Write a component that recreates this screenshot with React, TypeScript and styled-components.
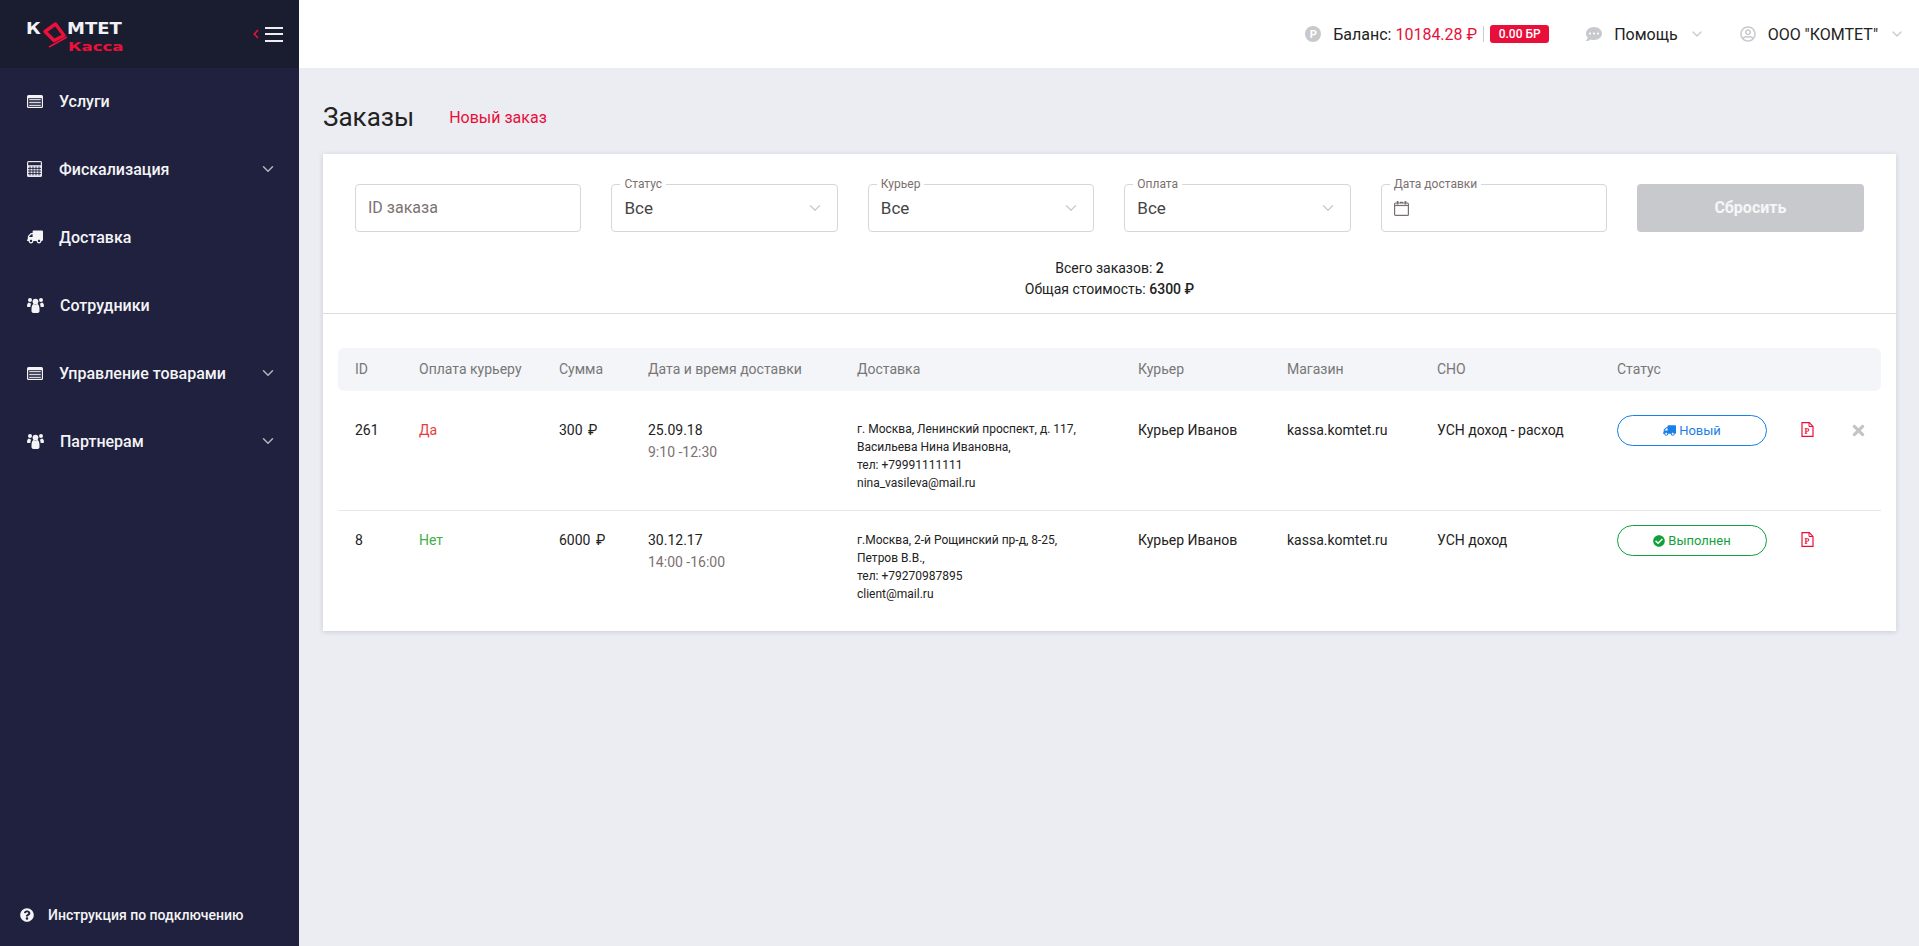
import React, { FC } from "react";
import styled, { createGlobalStyle } from "styled-components";
import {
  FaCheckCircle,
  FaCommentDots,
  FaQuestionCircle,
  FaRegUserCircle,
  FaTimes,
  FaTruck,
} from "react-icons/fa";
import { ChevronDown } from "lucide-react";

const GlobalStyle = createGlobalStyle`
  html, body {
    margin: 0;
    height: 100%;
    background: #ececf3;
    font-family: Roboto, "Liberation Sans", sans-serif;
    color: #222;
  }
  * { box-sizing: border-box; }
`;

const Page = styled.div`
  display: flex;
  height: 946px;
  overflow: hidden;
`;

const Sidebar = styled.aside`
  width: 299px;
  flex: none;
  display: flex;
  flex-direction: column;
  background: #1f213e;
  color: #fff;
`;

const SideHead = styled.div`
  height: 68px;
  flex: none;
  background: #1a1c30;
  display: flex;
  align-items: center;
  justify-content: space-between;
  padding: 0 16px 0 26px;
`;

const Logo = styled.div`
  display: flex;
  flex-direction: column;
  font-family: "DejaVu Sans", sans-serif;
  font-weight: 700;
  line-height: 1;
  margin-top: 7px;
`;

const LogoTop = styled.div`
  display: flex;
  align-items: center;
  height: 12px;
  font-size: 15px;
  color: #f2f2f4;
`;

const LogoLetters = styled.span<{ $width: number }>`
  display: inline-block;
  width: ${(p) => p.$width}px;
  transform: scaleX(1.2);
  transform-origin: left center;
  white-space: nowrap;
`;

const LogoBottom = styled.div`
  margin: 5px 0 0 42px;
  font-size: 12px;
  height: 11px;
  transform: scaleX(1.38);
  transform-origin: left center;
  color: #ed1139;
`;

const Toggle = styled.div`
  display: flex;
  align-items: center;
  gap: 6px;
`;

const Burger = styled.div`
  width: 18px;
  height: 15px;
  border-top: 2px solid #eee;
  border-bottom: 2px solid #eee;
  position: relative;
  &::after {
    content: "";
    position: absolute;
    left: 0;
    right: 0;
    top: 4.5px;
    height: 2px;
    background: #eee;
  }
`;

const Menu = styled.nav`
  display: flex;
  flex-direction: column;
  flex: 1;
  margin-top: -1px;
`;

const MenuItem = styled.div`
  height: 68px;
  display: flex;
  align-items: center;
  padding: 0 22px 0 27px;
  font-size: 16px;
  font-weight: 500;
  color: #f4f4f6;
`;

const MenuIcon = styled.span`
  width: 32px;
  flex: none;
  display: flex;
  align-items: center;
`;

const MenuLabel = styled.span<{ $shift?: boolean }>`
  flex: 1;
  margin-left: ${(p) => (p.$shift ? 1 : 0)}px;
`;

const SideChevron = styled(ChevronDown)`
  color: #b3b4c0;
`;

const Help = styled.div`
  display: flex;
  align-items: center;
  gap: 14px;
  padding: 0 20px 23px;
  font-size: 14px;
  font-weight: 500;
  color: #f4f4f6;
`;

const Main = styled.main`
  flex: 1;
  min-width: 0;
  display: flex;
  flex-direction: column;
`;

const TopBar = styled.header`
  height: 68px;
  flex: none;
  background: #fff;
  display: flex;
  align-items: center;
  justify-content: flex-end;
  padding-right: 14px;
  font-size: 16px;
  color: #222;
`;

const TopGroup = styled.div<{ $gap: number }>`
  display: flex;
  align-items: center;
  margin-left: ${(p) => p.$gap}px;
`;

const Coin = styled.span`
  width: 16px;
  height: 16px;
  border-radius: 50%;
  background: #c8c9cd;
  color: #fff;
  font-size: 11px;
  font-weight: 700;
  display: flex;
  align-items: center;
  justify-content: center;
  margin-right: 12px;
`;

const Money = styled.span`
  color: #e8103a;
  margin-left: 4px;
`;

const Sep = styled.span`
  width: 1px;
  height: 16px;
  background: #ccc;
  margin: 0 6px;
`;

const Bonus = styled.span`
  height: 18px;
  width: 59px;
  border-radius: 3px;
  background: #e8103a;
  color: #fff;
  font-size: 12px;
  font-weight: 500;
  display: flex;
  align-items: center;
  justify-content: center;
`;

const TopIcon = styled.span`
  display: flex;
  color: #c8c9cd;
  margin-right: 12px;
`;

const TopChevron = styled(ChevronDown)`
  color: #c8c9cd;
  margin-left: 11px;
`;

const Content = styled.div`
  padding: 0 23px 0 24px;
`;

const TitleRow = styled.div`
  height: 86px;
  display: flex;
  align-items: center;
  gap: 35px;
  padding-top: 12px;
`;

const Title = styled.h1`
  margin: 0;
  font-size: 26px;
  font-weight: 400;
  color: #222;
`;

const NewOrder = styled.a`
  font-size: 16px;
  color: #e8103a;
`;

const Card = styled.section`
  background: #fff;
  box-shadow: 0 1px 5px rgba(30, 30, 60, 0.16);
  height: 477px;
`;

const Filters = styled.div`
  display: grid;
  grid-template-columns: repeat(6, 1fr);
  gap: 30px;
  padding: 30px 32.4px 0 32px;
`;

const IdInput = styled.input`
  height: 48px;
  width: 100%;
  border: 1px solid #d6d6da;
  border-radius: 4px;
  padding: 0 12px 2px;
  font: 16px Roboto, sans-serif;
  outline: none;
  &::placeholder {
    color: #7d7272;
    opacity: 1;
  }
`;

const Field = styled.div`
  position: relative;
  height: 48px;
  border: 1px solid #d6d6da;
  border-radius: 4px;
  padding: 0 12px;
  display: flex;
  align-items: center;
  justify-content: space-between;
  font-size: 17px;
  color: #444;
`;

const FieldLabel = styled.span`
  position: absolute;
  left: 8px;
  top: -7px;
  padding: 0 4px;
  background: #fff;
  font-size: 12px;
  line-height: 13px;
  color: #7b6f6f;
`;

const FieldChevron = styled(ChevronDown)`
  color: #c8c9cd;
  margin-right: 1px;
`;

const Reset = styled.button`
  height: 48px;
  border: none;
  border-radius: 4px;
  padding: 0 0 2px;
  background: #c8c9cd;
  color: #f6f6f7;
  font: 700 16px Roboto, sans-serif;
`;

const Summary = styled.div`
  margin-top: 26px;
  height: 56px;
  border-bottom: 1px solid #dcdcde;
  text-align: center;
  font-size: 14px;
  line-height: 21px;
  color: #222;
  b {
    font-weight: 500;
  }
`;

const Table = styled.div`
  margin: 34px 15px 0;
`;

const Row = styled.div`
  display: grid;
  grid-template-columns: 64px 140px 89px 209px 281px 149px 150px 180px 201px 52px 1fr;
`;

const HeadRow = styled(Row)`
  height: 43px;
  padding-bottom: 2px;
  align-items: center;
  background: #f4f5f8;
  border-radius: 6px;
  font-size: 14px;
  color: #777;
`;

const BodyRow = styled(Row)<{ $last?: boolean }>`
  height: 120px;
  padding-top: ${(p) => (p.$last ? 18 : 28)}px;
  border-bottom: ${(p) => (p.$last ? "none" : "1px solid #e8e8ea")};
  font-size: 14px;
  line-height: 22px;
  color: #222;
`;

const Cell = styled.div`
  padding-left: 17px;
`;

const PlainCell = styled.div``;

const Paid = styled.div<{ $yes: boolean }>`
  color: ${(p) => (p.$yes ? "#e53d3d" : "#3fae49")};
`;

const Rub = styled.span`
  margin-left: 2px;
`;

const TimeText = styled.div`
  color: #7b7171;
`;

const Address = styled.div<{ $last?: boolean }>`
  font-size: 12px;
  line-height: 18px;
  margin-top: ${(p) => (p.$last ? 2 : 1)}px;
`;

const Badge = styled.div<{ $color: string }>`
  width: 150px;
  height: 31px;
  margin-top: -4px;
  border: 1px solid ${(p) => p.$color};
  border-radius: 16px;
  color: ${(p) => p.$color};
  font-size: 13px;
  display: flex;
  align-items: center;
  justify-content: center;
  gap: 3px;
`;

const IconCell = styled.div`
  display: flex;
  align-items: flex-start;
  padding-top: 3px;
`;

const CloseIcon = styled(FaTimes)`
  color: #c4c4c4;
  margin-left: -3px;
`;

const PdfIcon: FC = () => (
  <svg width="13" height="15" viewBox="0 0 13 15" fill="none">
    <path d="M1 .7h7.3L12 4.4v9.9H1z" stroke="#e8103a" strokeWidth="1.2" fill="#fff" />
    <path d="M8 .7v3.8h4" stroke="#e8103a" strokeWidth="1" />
    <text x="3.6" y="11.8" fontSize="8" fontWeight="700" fontFamily="Liberation Serif, serif" fill="#e8103a">
      P
    </text>
  </svg>
);

const ListIcon: FC = () => (
  <svg width="16" height="13" viewBox="0 0 16 13">
    <rect width="16" height="13" rx="1.5" fill="#f4f4f6" />
    <rect x="1.2" y="3.2" width="13.6" height="8.6" fill="#1f213e" />
    <path d="M2.2 4.7h11.6M2.2 7.5h11.6M2.2 10.3h11.6" stroke="#d4d4dc" strokeWidth="1.3" />
  </svg>
);

const CalcIcon: FC = () => (
  <svg width="15" height="16" viewBox="0 0 15 16">
    <rect width="15" height="16" rx="1.5" fill="#e8e8ee" />
    <rect x="1.2" y="1.2" width="12.6" height="3" fill="#1f213e" />
    <path
      d="M3 5.4v9M6 5.4v9M9 5.4v9M12 5.4v9M1 7.4h13M1 10h13M1 12.6h13"
      stroke="#1f213e"
      strokeWidth="0.9"
    />
  </svg>
);

const UsersIcon: FC = () => (
  <svg width="17" height="16" viewBox="0 0 17 16" fill="#f4f4f6">
    <circle cx="8.5" cy="4.6" r="2.9" />
    <circle cx="3" cy="3" r="2" />
    <circle cx="14" cy="3" r="2" />
    <path d="M0 9c0-2.300 1-3.500 2.200-3.500.6.800 1.400 1.100 2.100 1.100-.7 1-.9 2.200-.9 3.300H1C.4 9.900 0 9.600 0 9zM17 9c0-2.300-1-3.500-2.200-3.500-.6.800-1.400 1.100-2.100 1.100.7 1 .9 2.200.9 3.300H16c.6 0 1-.3 1-.9z" />
    <path d="M4.500 12c0-3 1-5 2.500-5 .5.500 1 .8 1.500.8s1-.3 1.500-.8c1.500 0 2.500 2 2.500 5v2c0 1.200-.8 2-2 2h-4c-1.200 0-2-.8-2-2z" />
  </svg>
);

const CalendarIcon: FC = () => (
  <svg width="15" height="16" viewBox="0 0 15 16" fill="none">
    <rect x=".6" y="3" width="13.800" height="12.400" rx="1" stroke="#7b6f6f" strokeWidth="1.200" />
    <path d="M.6 5.500h13.800" stroke="#7b6f6f" strokeWidth="1.200" />
    <path d="M3.600 1v3.500M11.400 1v3.500M6 2.500h3" stroke="#7b6f6f" strokeWidth="1.700" />
  </svg>
);

const LogoMark: FC = () => (
  <svg width="25" height="28" viewBox="0 0 25 28" style={{ margin: "-4px 0 -12px 0", flex: "none" }}>
    <path d="M13.500 4 22 15.500 12 20.500 3 11.500z" fill="none" stroke="#ed1139" strokeWidth="3.400" strokeLinejoin="round" />
    <path d="M7 27 25 17" stroke="#ed1139" strokeWidth="1.600" />
  </svg>
);

const columns = [
  "ID",
  "Оплата курьеру",
  "Сумма",
  "Дата и время доставки",
  "Доставка",
  "Курьер",
  "Магазин",
  "СНО",
  "Статус",
];

interface IOrder {
  id: string;
  paid: boolean;
  sum: string;
  date: string;
  time: string;
  address: string[];
  sno: string;
  isNew: boolean;
}

const orders: IOrder[] = [
  {
    id: "261",
    paid: true,
    sum: "300",
    date: "25.09.18",
    time: "9:10 -12:30",
    address: [
      "г. Москва, Ленинский проспект, д. 117,",
      "Васильева Нина Ивановна,",
      "тел: +79991111111",
      "nina_vasileva@mail.ru",
    ],
    sno: "УСН доход - расход",
    isNew: true,
  },
  {
    id: "8",
    paid: false,
    sum: "6000",
    date: "30.12.17",
    time: "14:00 -16:00",
    address: [
      "г.Москва, 2-й Рощинский пр-д, 8-25,",
      "Петров В.В.,",
      "тел: +79270987895",
      "client@mail.ru",
    ],
    sno: "УСН доход",
    isNew: false,
  },
];

const App: FC = () => (
  <Page>
    <GlobalStyle />
    <Sidebar>
      <SideHead>
        <Logo>
          <LogoTop>
            <LogoLetters $width={16}>К</LogoLetters>
            <LogoMark />
            <LogoLetters $width={54}>МТЕТ</LogoLetters>
          </LogoTop>
          <LogoBottom>Касса</LogoBottom>
        </Logo>
        <Toggle>
          <svg width="6" height="10" viewBox="0 0 6 10" fill="none">
            <path d="M5 1 1.3 5 5 9" stroke="#ed1139" strokeWidth="1.6" />
          </svg>
          <Burger />
        </Toggle>
      </SideHead>
      <Menu>
        <MenuItem>
          <MenuIcon><ListIcon /></MenuIcon>
          <MenuLabel>Услуги</MenuLabel>
        </MenuItem>
        <MenuItem>
          <MenuIcon><CalcIcon /></MenuIcon>
          <MenuLabel>Фискализация</MenuLabel>
          <SideChevron size={18} strokeWidth={2} />
        </MenuItem>
        <MenuItem>
          <MenuIcon><FaTruck size={16} style={{ transform: "scaleX(-1)" }} /></MenuIcon>
          <MenuLabel>Доставка</MenuLabel>
        </MenuItem>
        <MenuItem>
          <MenuIcon><UsersIcon /></MenuIcon>
          <MenuLabel $shift>Сотрудники</MenuLabel>
        </MenuItem>
        <MenuItem>
          <MenuIcon><ListIcon /></MenuIcon>
          <MenuLabel>Управление товарами</MenuLabel>
          <SideChevron size={18} strokeWidth={2} />
        </MenuItem>
        <MenuItem>
          <MenuIcon><UsersIcon /></MenuIcon>
          <MenuLabel $shift>Партнерам</MenuLabel>
          <SideChevron size={18} strokeWidth={2} />
        </MenuItem>
      </Menu>
      <Help>
        <FaQuestionCircle size={14} />
        Инструкция по подключению
      </Help>
    </Sidebar>
    <Main>
      <TopBar>
        <TopGroup $gap={0}>
          <Coin>Р</Coin>
          Баланс:
          <Money>10184.28 ₽</Money>
          <Sep />
          <Bonus>0.00 БР</Bonus>
        </TopGroup>
        <TopGroup $gap={37}>
          <TopIcon><FaCommentDots size={16} /></TopIcon>
          Помощь
          <TopChevron size={16} strokeWidth={2} />
        </TopGroup>
        <TopGroup $gap={35}>
          <TopIcon><FaRegUserCircle size={16} /></TopIcon>
          ООО "КОМТЕТ"
          <TopChevron size={16} strokeWidth={2} />
        </TopGroup>
      </TopBar>
      <Content>
        <TitleRow>
          <Title>Заказы</Title>
          <NewOrder>Новый заказ</NewOrder>
        </TitleRow>
        <Card>
          <Filters>
            <IdInput placeholder="ID заказа" />
            {["Статус", "Курьер", "Оплата"].map((label) => (
              <Field key={label}>
                <FieldLabel>{label}</FieldLabel>
                Все
                <FieldChevron size={18} strokeWidth={1.6} />
              </Field>
            ))}
            <Field>
              <FieldLabel>Дата доставки</FieldLabel>
              <CalendarIcon />
            </Field>
            <Reset>Сбросить</Reset>
          </Filters>
          <Summary>
            Всего заказов: <b>2</b>
            <br />
            Общая стоимость: <b>6300 ₽</b>
          </Summary>
          <Table>
            <HeadRow>
              {columns.map((name) => (
                <Cell key={name}>{name}</Cell>
              ))}
            </HeadRow>
            {orders.map((order, index) => {
              const last = index === orders.length - 1;
              return (
                <BodyRow key={order.id} $last={last}>
                  <Cell>{order.id}</Cell>
                  <Cell>
                    <Paid $yes={order.paid}>{order.paid ? "Да" : "Нет"}</Paid>
                  </Cell>
                  <Cell>
                    {order.sum} <Rub>₽</Rub>
                  </Cell>
                  <Cell>
                    {order.date}
                    <TimeText>{order.time}</TimeText>
                  </Cell>
                  <Cell>
                    <Address $last={last}>
                      {order.address.map((line) => (
                        <div key={line}>{line}</div>
                      ))}
                    </Address>
                  </Cell>
                  <Cell>Курьер Иванов</Cell>
                  <Cell>kassa.komtet.ru</Cell>
                  <Cell>{order.sno}</Cell>
                  <Cell>
                    {order.isNew ? (
                      <Badge $color="#1a7fe8">
                        <FaTruck size={13} style={{ transform: "scaleX(-1)" }} />
                        Новый
                      </Badge>
                    ) : (
                      <Badge $color="#0fa23b">
                        <FaCheckCircle size={12} />
                        Выполнен
                      </Badge>
                    )}
                  </Cell>
                  <IconCell><PdfIcon /></IconCell>
                  <PlainCell>
                    {order.isNew && (
                      <IconCell><CloseIcon size={17} /></IconCell>
                    )}
                  </PlainCell>
                </BodyRow>
              );
            })}
          </Table>
        </Card>
      </Content>
    </Main>
  </Page>
);

export default App;
